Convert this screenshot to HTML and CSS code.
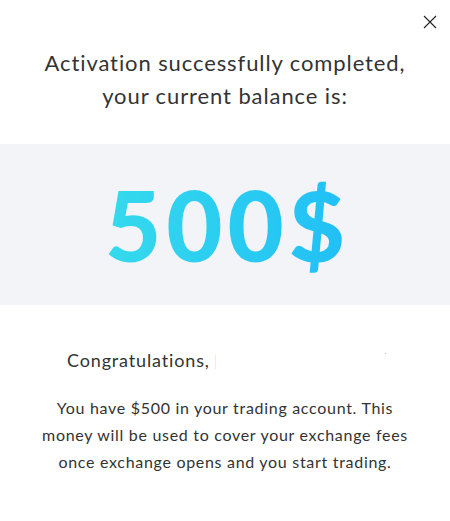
FILE: index.html
```html
<!DOCTYPE html>
<html lang="en">
<head>
    <meta charset="UTF-8">
    <title>Activation</title>
    <link rel="stylesheet" href="styles.css">
</head>
<body>
<div class="modal">
    <button class="close" aria-label="Close">
        <svg width="14" height="14" viewBox="0 0 14 14"><path d="M1 1L13 13M13 1L1 13" stroke="#222" stroke-width="1.1" fill="none"/></svg>
    </button>
    <h2 class="title">Activation successfully completed,<br>your current balance is:</h2>
    <div class="balance">
        <span class="amount">500$</span>
    </div>
    <p class="greeting">Congratulations, <span class="name"></span></p>
    <p class="info">You have $500 in your trading account. This money will be used to cover your exchange fees once exchange opens and you start trading.</p>
</div>
</body>
</html>
```

FILE: styles.css
```css
body {
    margin: 0;
    background: #fff;
    font-family: Lato, "Open Sans", sans-serif;
    color: #333;
}
.modal {
    position: relative;
    width: 450px;
    height: 521px;
    overflow: hidden;
}
.close {
    position: absolute;
    top: 15px;
    right: 13px;
    padding: 0;
    border: 0;
    background: none;
    width: 14px;
    height: 14px;
}
.close svg {
    display: block;
}
.title {
    margin: 0;
    padding-top: 46px;
    font-size: 22px;
    font-weight: 400;
    line-height: 33px;
    letter-spacing: 0.9px;
    text-align: center;
    color: #333;
}
.balance {
    margin-top: 32px;
    height: 161px;
    background: #f3f4f8;
    display: flex;
    align-items: center;
    justify-content: center;
}
.amount {
    font-size: 97px;
    font-weight: 900;
    letter-spacing: 5px;
    margin-right: -5px;
    background: linear-gradient(90deg, #35daec, #21bff6);
    -webkit-background-clip: text;
    background-clip: text;
    color: transparent;
}
.greeting {
    margin: 43px 0 0 67px;
    font-size: 18px;
    line-height: 24px;
    letter-spacing: 0.85px;
}
.name {
    position: relative;
    display: inline-block;
    width: 170px;
    height: 14px;
    vertical-align: -2px;
    border-left: 1px solid #f6ecd2;
}
.name:after {
    content: "";
    position: absolute;
    right: 0;
    top: -2px;
    width: 1px;
    height: 1px;
    background: #a9b7c9;
}
.info {
    margin: 22px 34px 0;
    font-size: 16px;
    line-height: 27px;
    letter-spacing: 0.7px;
    text-align: center;
}
```
